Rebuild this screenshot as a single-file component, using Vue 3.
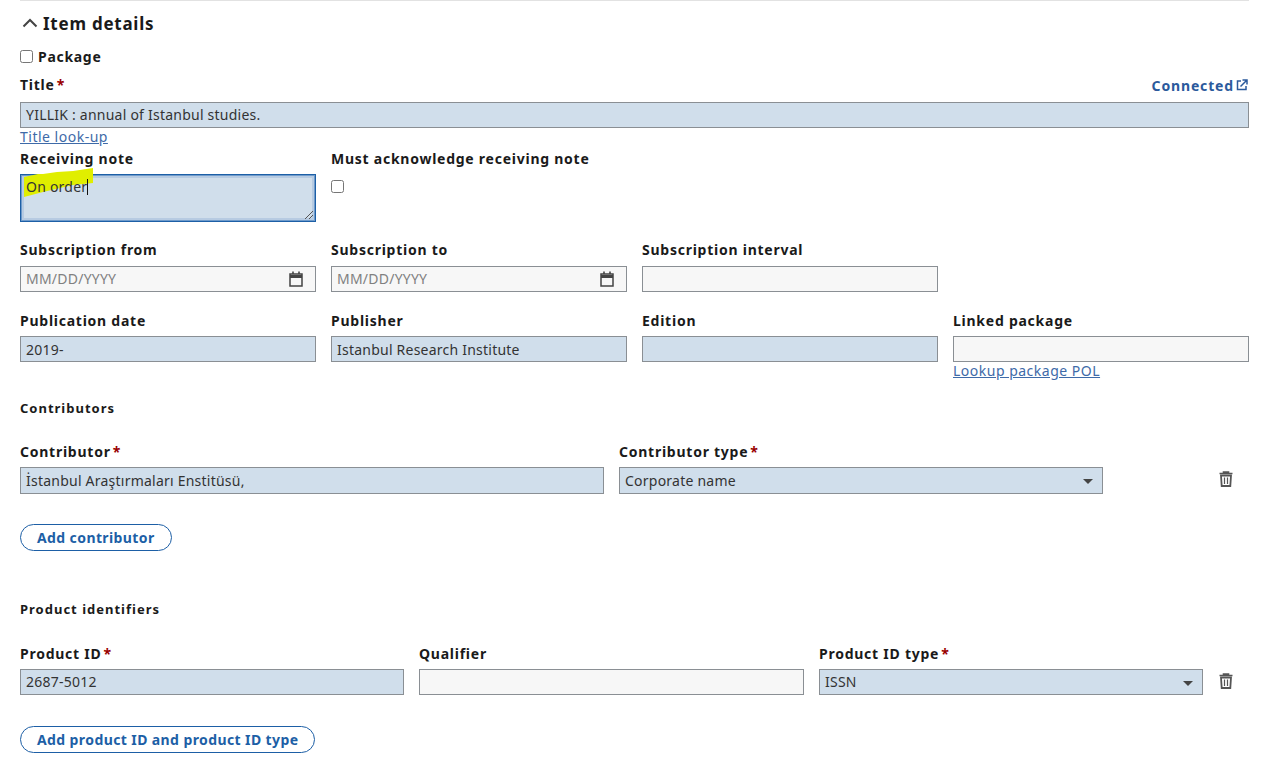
<script setup>
const grid3 = [
  { label: 'Subscription from', date: true },
  { label: 'Subscription to', date: true },
  { label: 'Subscription interval', value: '' }
]
const grid4 = [
  { label: 'Publication date', value: '2019-', filled: true },
  { label: 'Publisher', value: 'Istanbul Research Institute', filled: true },
  { label: 'Edition', value: '', filled: true },
  { label: 'Linked package', value: '', link: 'Lookup package POL' }
]
</script>

<template>
  <div class="page">
    <div class="heading">
      <svg class="chevron" width="16" height="10" viewBox="0 0 16 10">
        <path d="M1.5 8.5 L8 2 L14.5 8.5" fill="none" stroke="#444" stroke-width="2" />
      </svg>
      <h2>Item details</h2>
    </div>

    <label class="package">
      <input type="checkbox" class="check" />
      <span>Package</span>
    </label>

    <div class="title-head">
      <span class="label">Title<i>*</i></span>
      <span class="connected">
        Connected
        <svg width="12" height="12" viewBox="0 0 12 12">
          <path d="M5 2 H1.5 V10.5 H10 V7" fill="none" stroke="#2b5a9c" stroke-width="1.5" />
          <path d="M4.5 7.5 L10.5 1.5 M6.5 1 H11 V5.5" fill="none" stroke="#2b5a9c" stroke-width="1.5" />
        </svg>
      </span>
    </div>
    <div class="box filled">YILLIK : annual of Istanbul studies.</div>
    <a class="link">Title look-up</a>

    <div class="note-row">
      <div class="col">
        <div class="label">Receiving note</div>
        <div class="box filled note">
          <svg class="marker" width="72" height="30" viewBox="0 0 72 30">
            <path d="M1 9 L15 6 L20 6 L34 4 L50 3 L70 0 L70 15 L50 17 L37 20 L20 24 L1 29 Z" fill="#e0ee00" />
          </svg>
          <span class="note-text">On order<span class="caret"></span></span>
          <svg class="grip" width="10" height="10" viewBox="0 0 10 10">
            <path d="M1 9 L9 1 M5 9 L9 5" stroke="#555" stroke-width="1" />
          </svg>
        </div>
      </div>
      <div class="col">
        <div class="label">Must acknowledge receiving note</div>
        <input type="checkbox" class="check ack" />
      </div>
    </div>

    <div class="row sub-row">
      <div v-for="f in grid3" :key="f.label" class="col">
        <div class="label">{{ f.label }}</div>
        <div class="box" :class="{ date: f.date }">
          <template v-if="f.date">
            <span>MM/DD/YYYY</span>
            <svg width="14" height="16" viewBox="0 0 14 16">
              <path d="M1 3 H13 V15 H1 Z" fill="none" stroke="#444" stroke-width="1.5" />
              <path d="M1 5.5 H13" stroke="#444" stroke-width="3" />
              <path d="M4 0.5 V3 M10 0.5 V3" stroke="#444" stroke-width="1.6" />
            </svg>
          </template>
        </div>
      </div>
    </div>

    <div class="row pub-row">
      <div v-for="f in grid4" :key="f.label" class="col">
        <div class="label">{{ f.label }}</div>
        <div class="box" :class="{ filled: f.filled }">{{ f.value }}</div>
        <a v-if="f.link" class="link">{{ f.link }}</a>
      </div>
    </div>

    <h3 class="section contributors">Contributors</h3>
    <div class="line contributor-line">
      <div class="cell">
        <div class="label">Contributor<i>*</i></div>
        <div class="box filled">İstanbul Araştırmaları Enstitüsü,</div>
      </div>
      <div class="cell">
        <div class="label">Contributor type<i>*</i></div>
        <div class="box filled select">Corporate name<b class="arrow"></b></div>
      </div>
      <button class="trash" aria-label="Remove">
        <svg width="14" height="16" viewBox="0 0 14 16">
          <path d="M0.5 2.5 H13.5 M4.5 2.5 V1 H9.5 V2.5" fill="none" stroke="#555" stroke-width="1.6" />
          <path d="M2 4.5 H12 L11.3 15 H2.7 Z" fill="none" stroke="#555" stroke-width="1.8" />
          <path d="M5.5 6.5 V13 M8.5 6.5 V13" stroke="#555" stroke-width="1.2" />
        </svg>
      </button>
    </div>
    <button class="pill add-contributor">Add contributor</button>

    <h3 class="section products">Product identifiers</h3>
    <div class="line product-line">
      <div class="cell">
        <div class="label">Product ID<i>*</i></div>
        <div class="box filled">2687-5012</div>
      </div>
      <div class="cell">
        <div class="label">Qualifier</div>
        <div class="box"></div>
      </div>
      <div class="cell">
        <div class="label">Product ID type<i>*</i></div>
        <div class="box filled select">ISSN<b class="arrow"></b></div>
      </div>
      <button class="trash" aria-label="Remove">
        <svg width="14" height="16" viewBox="0 0 14 16">
          <path d="M0.5 2.5 H13.5 M4.5 2.5 V1 H9.5 V2.5" fill="none" stroke="#555" stroke-width="1.6" />
          <path d="M2 4.5 H12 L11.3 15 H2.7 Z" fill="none" stroke="#555" stroke-width="1.8" />
          <path d="M5.5 6.5 V13 M8.5 6.5 V13" stroke="#555" stroke-width="1.2" />
        </svg>
      </button>
    </div>
    <button class="pill add-product">Add product ID and product ID type</button>
  </div>
</template>

<style>
html, body { background: #fff; }
</style>

<style scoped>
.page {
  box-sizing: border-box;
  width: 1274px;
  height: 764px;
  overflow: hidden;
  padding: 0 25px 0 20px;
  font-family: "Noto Sans", "Open Sans", sans-serif;
  font-size: 13px;
  color: #1a1a1a;
}

.heading {
  display: flex;
  align-items: center;
  gap: 5px;
  height: 44px;
  border-top: 1px solid #e2e2e2;
  padding-left: 2px;
}
.heading h2 {
  margin: 0;
  font-size: 17px;
  font-weight: 700;
  letter-spacing: .75px;
}

.package {
  display: flex;
  align-items: center;
  gap: 5px;
  height: 20px;
  font-size: 14px;
  font-weight: 700;
  letter-spacing: .7px;
  margin-top: 1px;
}
.check {
  width: 13px;
  height: 13px;
  margin: 0;
}

.title-head {
  display: flex;
  justify-content: space-between;
  align-items: center;
  height: 20px;
  margin-top: 9px;
  margin-bottom: 7px;
}
.label {
  height: 20px;
  line-height: 20px;
  font-size: 14px;
  font-weight: 700;
  letter-spacing: .75px;
  white-space: nowrap;
}
.label i {
  font-style: normal;
  color: #900;
  margin-left: 2px;
}
.connected {
  display: flex;
  align-items: center;
  gap: 2px;
  margin-right: 1px;
  font-size: 14px;
  font-weight: 700;
  letter-spacing: .85px;
  color: #2b5a9c;
}

.box {
  box-sizing: border-box;
  height: 26px;
  line-height: 24px;
  padding: 0 5px;
  border: 1px solid #8a8f94;
  background: #f7f7f7;
  font-size: 14px;
  letter-spacing: .23px;
  color: #333;
  white-space: nowrap;
}
.filled {
  background: #d0deeb;
}

.link {
  display: block;
  font-size: 14px;
  line-height: 17px;
  letter-spacing: .5px;
  color: #3e6aa8;
  text-decoration: underline;
}

.note-row,
.row {
  display: grid;
  grid-template-columns: repeat(4, 296px);
  gap: 15px;
}
.note-row {
  margin-top: 4px;
}
.note {
  position: relative;
  height: 48px;
  margin-top: 5px;
  border: 1px solid #1d5fa6;
  box-shadow: inset 0 0 0 1px #6f9bcb, inset 0 0 0 3px #b7cbe2;
  line-height: 24px;
}
.note-text {
  position: relative;
}
.caret {
  display: inline-block;
  width: 1px;
  height: 16px;
  background: #111;
  vertical-align: -3px;
}
.marker {
  position: absolute;
  left: 2px;
  top: -7px;
}
.grip {
  position: absolute;
  right: 1px;
  bottom: 1px;
}
.ack {
  display: block;
  margin-top: 11px;
}

.sub-row {
  margin-top: 18px;
}
.sub-row .label {
  margin-bottom: 6px;
}
.date {
  display: flex;
  justify-content: space-between;
  align-items: center;
  color: #808080;
  padding-right: 12px;
}
.pub-row {
  margin-top: 19px;
}
.pub-row .label {
  margin-bottom: 5px;
}
.pub-row .box {
  line-height: 26px;
}

.section {
  margin: 0;
  height: 20px;
  line-height: 20px;
  font-size: 13px;
  font-weight: 700;
  letter-spacing: 1px;
}
.contributors {
  margin-top: 19px;
}
.products {
  margin-top: 48px;
}

.line {
  position: relative;
  display: flex;
  gap: 15px;
}
.contributor-line {
  margin-top: 24px;
}
.contributor-line .cell:nth-child(1) { width: 584px; }
.contributor-line .cell:nth-child(2) { width: 484px; }
.contributor-line .box {
  height: 27px;
  line-height: 26px;
}
.product-line {
  margin-top: 25px;
}
.product-line .cell:nth-child(1) { width: 384px; }
.product-line .cell:nth-child(2) { width: 385px; }
.product-line .cell:nth-child(3) { width: 384px; }
.cell .label {
  margin-bottom: 5px;
}

.select {
  position: relative;
}
.arrow {
  position: absolute;
  right: 9px;
  top: 11px;
  width: 0;
  height: 0;
  border-left: 5px solid transparent;
  border-right: 5px solid transparent;
  border-top: 5px solid #444;
}

.trash {
  position: absolute;
  left: 1199px;
  top: 29px;
  padding: 0;
  border: 0;
  background: none;
  line-height: 0;
}

.pill {
  display: block;
  box-sizing: border-box;
  height: 27px;
  padding: 0 16px;
  border: 1px solid #1d5fa6;
  border-radius: 14px;
  background: #fff;
  font-family: inherit;
  font-size: 14px;
  font-weight: 700;
  letter-spacing: .4px;
  color: #1d5fa6;
}
.add-contributor {
  margin-top: 30px;
}
.add-product {
  margin-top: 31px;
}
</style>
